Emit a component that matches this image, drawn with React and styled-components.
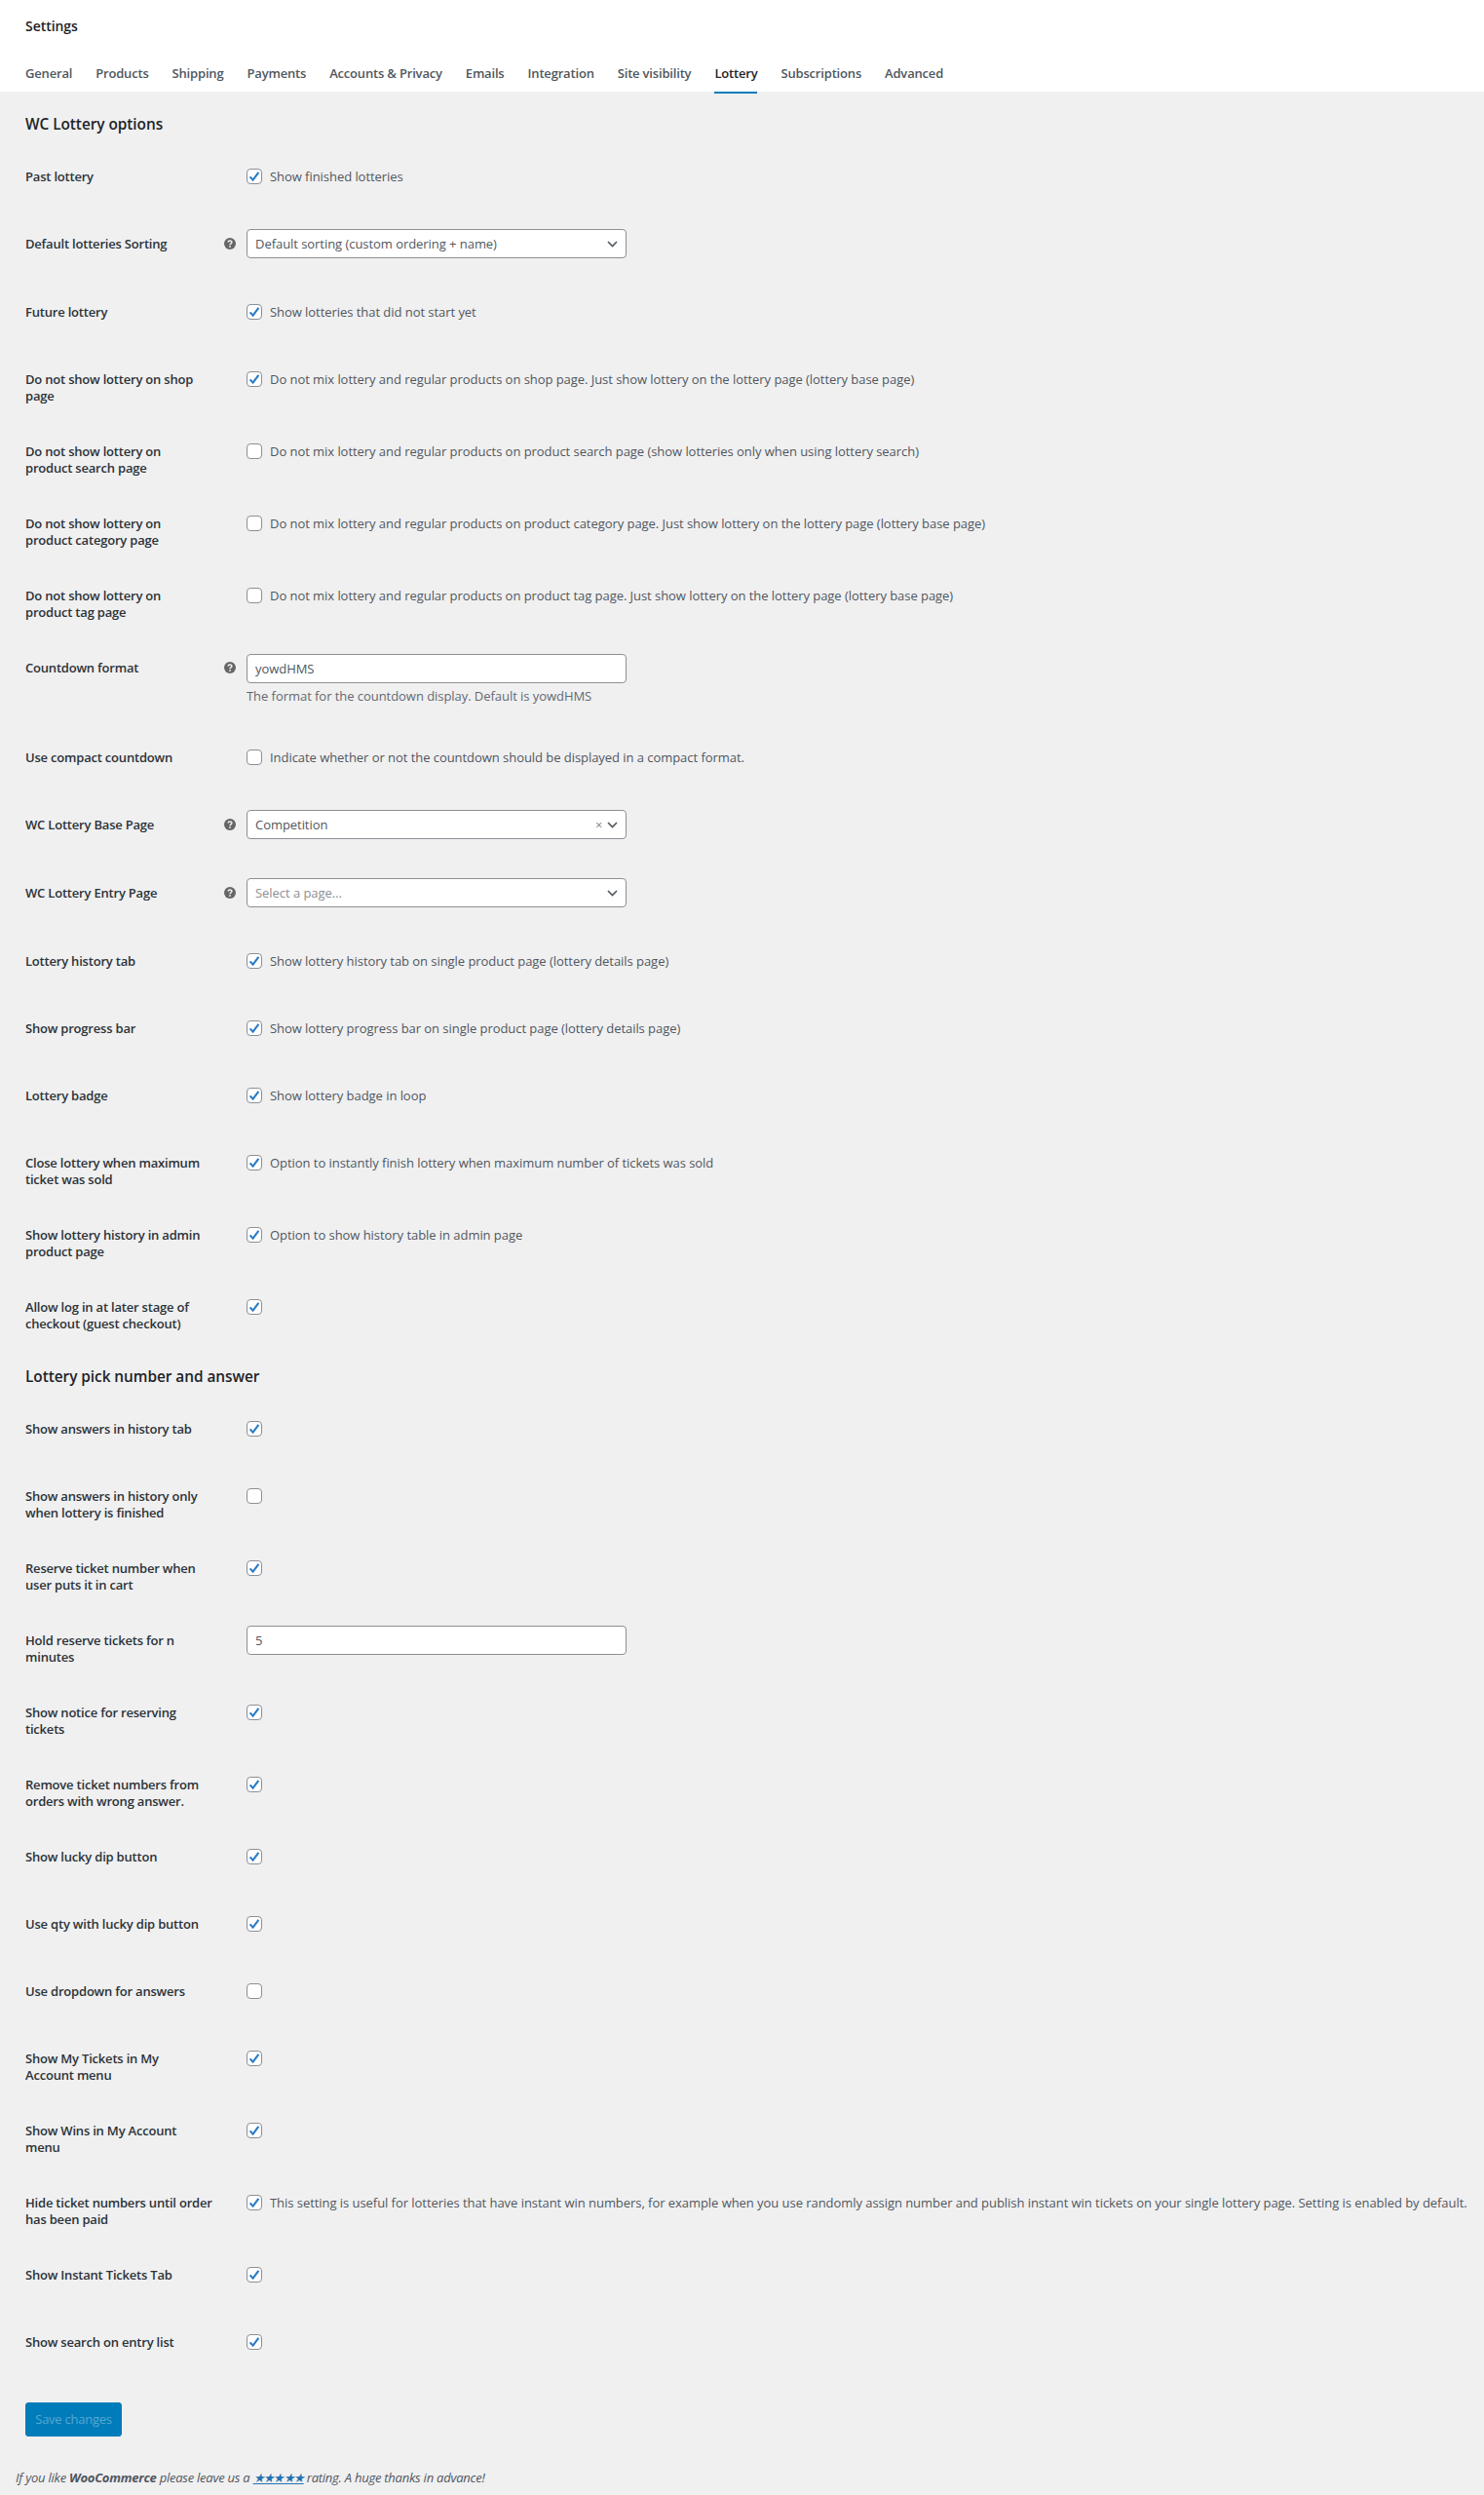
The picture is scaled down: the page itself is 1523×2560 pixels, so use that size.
import React from 'react';
import styled, { createGlobalStyle } from 'styled-components';

const GlobalStyle = createGlobalStyle`
  html, body { margin: 0; padding: 0; background: #f0f0f1; }
  body {
    font-family: 'Open Sans', 'Noto Sans', sans-serif;
    font-size: 13px;
    line-height: 17px;
    letter-spacing: -0.05px;
    color: #50575e;
  }
`;

const Page = styled.div`
  width: 1523px;
  min-height: 2560px;
  background: #f0f0f1;
`;

const Header = styled.header`
  height: 94px;
  background: #fff;
  padding-left: 26px;
  box-sizing: border-box;
`;

const PageTitle = styled.h1`
  margin: 0;
  padding-top: 18px;
  font-size: 14px;
  line-height: 18px;
  font-weight: 600;
  color: #1d2327;
`;

const Tabs = styled.nav`
  display: flex;
  gap: 24px;
  margin-top: 30px;
`;

const Tab = styled.a`
  display: block;
  height: 28px;
  font-weight: 600;
  letter-spacing: -0.18px;
  line-height: 18px;
  color: ${(p) => (p.$active ? '#1d2327' : '#50575e')};
  border-bottom: ${(p) => (p.$active ? '2px solid #007cba' : '2px solid transparent')};
`;

const Content = styled.main`
  padding-left: 26px;
`;

const SectionTitle = styled.h2`
  margin: 0;
  padding-top: ${(p) => p.$top}px;
  padding-bottom: 14px;
  font-size: 15.4px;
  line-height: 20px;
  font-weight: 600;
  letter-spacing: -0.05px;
  color: #1d2327;
`;

const Row = styled.div`
  display: grid;
  grid-template-columns: 204px 23px 1fr;
  min-height: 69px;
`;

const Label = styled.div`
  padding: 21px 0 19px;
  font-weight: 600;
  letter-spacing: -0.2px;
  white-space: pre-line;
  color: #2c3338;
`;

const TipCell = styled.div`
  padding-top: 23px;
  line-height: 0;
`;

const Control = styled.div`
  padding-top: ${(p) => p.$top}px;
  padding-bottom: ${(p) => p.$bottom}px;
`;

const CheckLine = styled.div`
  display: flex;
  align-items: center;
  gap: 8px;
  line-height: 16px;
  white-space: nowrap;
`;

const Box = styled.span`
  flex: none;
  box-sizing: border-box;
  width: 16px;
  height: 16px;
  border: 1px solid #8c8f94;
  border-radius: 4px;
  background: #fff;
  display: flex;
  align-items: center;
  justify-content: center;
`;

const Field = styled.div`
  box-sizing: border-box;
  width: 390px;
  height: 30px;
  padding: 0 8px;
  display: flex;
  align-items: center;
  background: #fff;
  border: 1px solid #8c8f94;
  border-radius: 4px;
  color: ${(p) => (p.$placeholder ? '#8c8f94' : '#50575e')};
`;

const FieldText = styled.span`
  flex: 1;
`;

const Clear = styled.span`
  margin-right: 5px;
  font-size: 12px;
  color: #777;
`;

const Description = styled.p`
  margin: 5px 0 0;
  color: #646970;
`;

const SaveButton = styled.button`
  display: block;
  width: 99px;
  height: 35px;
  margin: 22px 0 0;
  padding: 0;
  background: #007cba;
  border: 1px solid #007cba;
  border-radius: 3px;
  font: inherit;
  letter-spacing: -0.25px;
  color: rgba(255, 255, 255, 0.35);
`;

const Footer = styled.p`
  margin: 34px 0 0 16px;
  font-style: italic;
  letter-spacing: -0.24px;
  color: #50575e;
`;

const Stars = styled.a`
  color: #2271b1;
  text-decoration: underline;
  letter-spacing: -1.6px;
`;

const Check = () => (
  <svg width="12" height="12" viewBox="0 0 12 12">
    <path d="M1.6 6.4 L4.6 9.6 L10.4 1.8" fill="none" stroke="#2a7bc8" strokeWidth="2.1" />
  </svg>
);

const Tip = () => (
  <svg width="12" height="12" viewBox="0 0 12 12">
    <circle cx="6" cy="6" r="6" fill="#666" />
    <path d="M4.2 4.6 C4.2 2.4 7.9 2.4 7.9 4.5 C7.9 5.8 6 5.8 6 7.2" fill="none" stroke="#f0f0f1" strokeWidth="1.5" />
    <rect x="5.2" y="8.2" width="1.6" height="1.6" fill="#f0f0f1" />
  </svg>
);

const Chevron = () => (
  <svg width="11" height="7" viewBox="0 0 11 7">
    <path d="M1 1 L5.5 5.5 L10 1" fill="none" stroke="#50575e" strokeWidth="1.6" />
  </svg>
);

const CheckRow = ({ label, checked, text }) => (
  <Row>
    <Label>{label}</Label>
    <div />
    <Control $top={21}>
      <CheckLine>
        <Box>{checked && <Check />}</Box>
        {text && <span>{text}</span>}
      </CheckLine>
    </Control>
  </Row>
);

const FieldRow = ({ label, tip, value, select, clear, placeholder, description }) => (
  <Row>
    <Label>{label}</Label>
    <TipCell>{tip && <Tip />}</TipCell>
    <Control $top={description ? 15 : 14} $bottom={description ? 25 : 26}>
      <Field $placeholder={placeholder}>
        <FieldText>{value}</FieldText>
        {clear && <Clear>×</Clear>}
        {select && <Chevron />}
      </Field>
      {description && <Description>{description}</Description>}
    </Control>
  </Row>
);

const tabs = ['General', 'Products', 'Shipping', 'Payments', 'Accounts & Privacy', 'Emails', 'Integration', 'Site visibility', 'Lottery', 'Subscriptions', 'Advanced'];

const optionRows = [
  { label: 'Past lottery', checked: true, text: 'Show finished lotteries' },
  { label: 'Default lotteries Sorting', field: true, tip: true, select: true, value: 'Default sorting (custom ordering + name)' },
  { label: 'Future lottery', checked: true, text: 'Show lotteries that did not start yet' },
  { label: 'Do not show lottery on shop\npage', checked: true, text: 'Do not mix lottery and regular products on shop page. Just show lottery on the lottery page (lottery base page)' },
  { label: 'Do not show lottery on\nproduct search page', text: 'Do not mix lottery and regular products on product search page (show lotteries only when using lottery search)' },
  { label: 'Do not show lottery on\nproduct category page', text: 'Do not mix lottery and regular products on product category page. Just show lottery on the lottery page (lottery base page)' },
  { label: 'Do not show lottery on\nproduct tag page', text: 'Do not mix lottery and regular products on product tag page. Just show lottery on the lottery page (lottery base page)' },
  { label: 'Countdown format', field: true, tip: true, value: 'yowdHMS', description: 'The format for the countdown display. Default is yowdHMS' },
  { label: 'Use compact countdown', text: 'Indicate whether or not the countdown should be displayed in a compact format.' },
  { label: 'WC Lottery Base Page', field: true, tip: true, select: true, clear: true, value: 'Competition' },
  { label: 'WC Lottery Entry Page', field: true, tip: true, select: true, placeholder: true, value: 'Select a page...' },
  { label: 'Lottery history tab', checked: true, text: 'Show lottery history tab on single product page (lottery details page)' },
  { label: 'Show progress bar', checked: true, text: 'Show lottery progress bar on single product page (lottery details page)' },
  { label: 'Lottery badge', checked: true, text: 'Show lottery badge in loop' },
  { label: 'Close lottery when maximum\nticket was sold', checked: true, text: 'Option to instantly finish lottery when maximum number of tickets was sold' },
  { label: 'Show lottery history in admin\nproduct page', checked: true, text: 'Option to show history table in admin page' },
  { label: 'Allow log in at later stage of\ncheckout (guest checkout)', checked: true },
];

const pickRows = [
  { label: 'Show answers in history tab', checked: true },
  { label: 'Show answers in history only\nwhen lottery is finished' },
  { label: 'Reserve ticket number when\nuser puts it in cart', checked: true },
  { label: 'Hold reserve tickets for n\nminutes', field: true, value: '5' },
  { label: 'Show notice for reserving\ntickets', checked: true },
  { label: 'Remove ticket numbers from\norders with wrong answer.', checked: true },
  { label: 'Show lucky dip button', checked: true },
  { label: 'Use qty with lucky dip button', checked: true },
  { label: 'Use dropdown for answers' },
  { label: 'Show My Tickets in My\nAccount menu', checked: true },
  { label: 'Show Wins in My Account\nmenu', checked: true },
  { label: 'Hide ticket numbers until order\nhas been paid', checked: true, text: 'This setting is useful for lotteries that have instant win numbers, for example when you use randomly assign number and publish instant win tickets on your single lottery page. Setting is enabled by default.' },
  { label: 'Show Instant Tickets Tab', checked: true },
  { label: 'Show search on entry list', checked: true },
];

const renderRow = (row) => (row.field ? <FieldRow key={row.label} {...row} /> : <CheckRow key={row.label} {...row} />);

export default function App() {
  return (
    <Page>
      <GlobalStyle />
      <Header>
        <PageTitle>Settings</PageTitle>
        <Tabs>
          {tabs.map((tab) => (
            <Tab key={tab} $active={tab === 'Lottery'}>{tab}</Tab>
          ))}
        </Tabs>
      </Header>
      <Content>
        <SectionTitle $top={24}>WC Lottery options</SectionTitle>
        {optionRows.map(renderRow)}
        <SectionTitle $top={17}>Lottery pick number and answer</SectionTitle>
        {pickRows.map(renderRow)}
        <SaveButton>Save changes</SaveButton>
      </Content>
      <Footer>
        If you like <strong>WooCommerce</strong> please leave us a <Stars>★★★★★</Stars> rating. A huge thanks in advance!
      </Footer>
    </Page>
  );
}
